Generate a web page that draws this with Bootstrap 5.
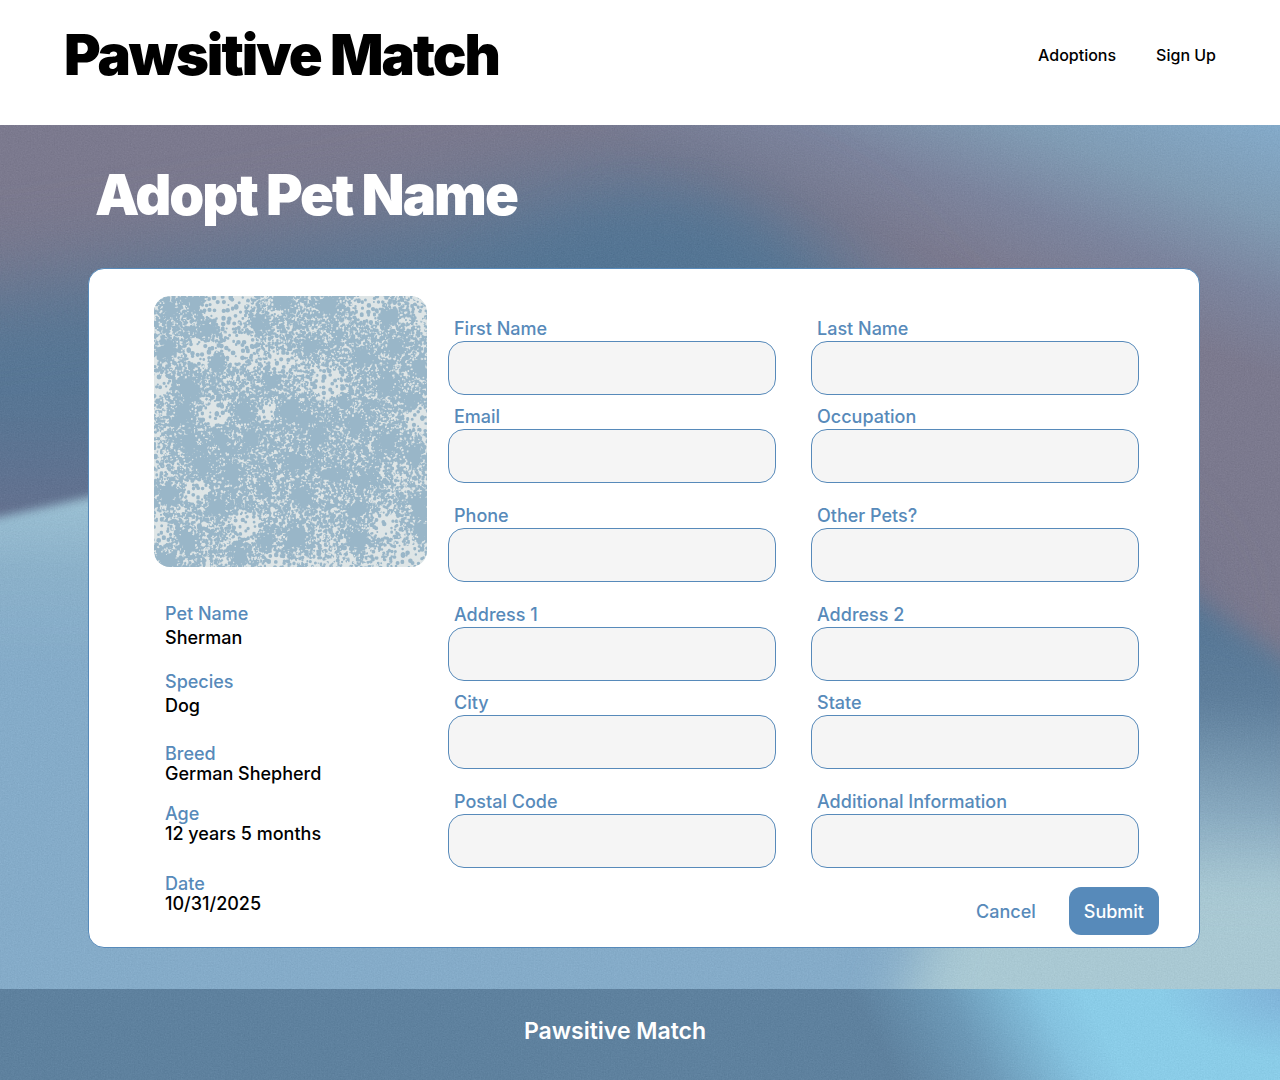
<!DOCTYPE html>
<html lang="en">
<head>
<meta charset="utf-8">
<meta name="viewport" content="width=device-width, initial-scale=1">
<title>Pawsitive Match</title>
<link href="https://cdn.jsdelivr.net/npm/bootstrap@5.3.0/dist/css/bootstrap.min.css" rel="stylesheet">
<style>
  :root { --steel: #578aba; }
  body { font-family: Inter, "Liberation Sans", sans-serif; color: #000; }
  .site-head { padding: 19px 64px 34px; }
  .display-title { font-size: 56px; line-height: 72px; font-weight: 900; letter-spacing: -2px; margin: 0; }
  .site-head nav { gap: 40px; }
  .site-head nav a { color: #000; font-size: 16px; font-weight: 500; text-decoration: none; }
  .backdrop { z-index: 0; }
  .backdrop filter { color-interpolation-filters: sRGB; }
  .adopt { padding: 34px 80px 41px 88px; }
  .adopt h1 { padding-left: 7px; margin-bottom: 37px; }
  .pet-panel { background: #fff; border: 1px solid var(--steel); border-radius: 16px; padding: 27px 40px 12px 65px; gap: 21px; }
  .pet-side { flex: 0 0 273px; }
  .pet-photo { width: 100%; height: 271px; border-radius: 16px; }
  .facts { padding-left: 11px; margin: 35px 0 0; font-size: 18px; line-height: 20px; }
  .facts dt { color: var(--steel); font-weight: 500; }
  .facts dd { font-weight: 500; margin: 0; }
  .facts .roomy { line-height: 24px; margin-bottom: 20px; }
  .facts .tight { margin-top: 26px; }
  .facts .spaced { margin-top: 20px; }
  .facts .wide { margin-top: 30px; }
  .pet-form { min-width: 0; padding-top: 20px; }
  .field-set { padding-right: 20px; gap: 20px; }
  .field-pair { display: grid; grid-template-columns: 1fr 1fr; gap: 9px 35px; }
  .field-pair label { display: block; padding-left: 6px; font-size: 18px; line-height: 25px; font-weight: 500; color: var(--steel); }
  .field-pair .form-control { height: 54px; border: 1px solid var(--steel); border-radius: 16px; background: #f5f5f5; }
  .pet-actions { margin-top: 19px; gap: 18px; }
  .pet-actions .btn { height: 48px; padding: 0 15px; border: 0; border-radius: 12px; font-size: 18px; font-weight: 500; }
  .btn-plain { color: var(--steel); }
  .btn-steel, .btn-steel:hover { background: var(--steel); color: #fff; }
  .site-foot { padding: 24px 50px 31px 0; background: #5c81a0; }
  .site-foot p { font-size: 23px; line-height: 36px; font-weight: 600; margin: 0; }
</style>
</head>
<body>
<header class="site-head d-flex justify-content-between align-items-center bg-white">
  <div class="display-title">Pawsitive Match</div>
  <nav class="d-flex" aria-label="Main">
    <a href="#">Adoptions</a>
    <a href="#">Sign Up</a>
  </nav>
</header>

<main class="position-relative">
  <svg class="backdrop position-absolute top-0 start-0 w-100 h-100" viewBox="0 125 1280 864" preserveAspectRatio="none" aria-hidden="true">
    <defs>
      <filter id="b50" x="-20%" y="-20%" width="140%" height="140%"><feGaussianBlur stdDeviation="44"/></filter>
      <filter id="b25" x="-40%" y="-40%" width="180%" height="180%"><feGaussianBlur stdDeviation="28"/></filter>
      <filter id="b14" x="-20%" y="-20%" width="140%" height="140%"><feGaussianBlur stdDeviation="12"/></filter>
      <filter id="b6" x="-20%" y="-20%" width="140%" height="140%"><feGaussianBlur stdDeviation="5"/></filter>
      <filter id="grain" x="0" y="0" width="100%" height="100%"><feTurbulence type="fractalNoise" baseFrequency="0.7" numOctaves="2" seed="3"/><feColorMatrix values="0.6 0.6 0.6 0 -0.4  0.6 0.6 0.6 0 -0.4  0.6 0.6 0.6 0 -0.4  0 0 0 0 0.06"/></filter>
      <linearGradient id="sky" gradientUnits="userSpaceOnUse" x1="1000" y1="277" x2="1081" y2="52">
        <stop offset="0" stop-color="#7b798f"/><stop offset=".3" stop-color="#7b849f"/><stop offset=".62" stop-color="#809db7"/><stop offset="1" stop-color="#84adce"/>
      </linearGradient>
      <linearGradient id="fall" gradientUnits="userSpaceOnUse" x1="1240" y1="620" x2="1225" y2="940">
        <stop offset="0" stop-color="#547696"/><stop offset=".25" stop-color="#5c7e9d"/><stop offset=".65" stop-color="#8fb2c8"/><stop offset="1" stop-color="#abcdd8"/>
      </linearGradient>
      <linearGradient id="lake" x1="0" y1="490" x2="0" y2="665" gradientUnits="userSpaceOnUse">
        <stop offset="0" stop-color="#9fc6d9"/><stop offset=".45" stop-color="#8cb4ce"/><stop offset="1" stop-color="#85aecd"/>
      </linearGradient>
      <linearGradient id="dusk" x1="0" y1="410" x2="0" y2="515" gradientUnits="userSpaceOnUse">
        <stop offset="0" stop-color="#547696"/><stop offset="1" stop-color="#646f8f"/>
      </linearGradient>
    </defs>
    <rect y="125" width="1280" height="864" fill="url(#sky)"/>
    <path d="M-150 300L0 290L200 260L400 225L560 185L660 175L750 205L830 250L900 320L1180 600V1100H-150Z" fill="url(#dusk)" filter="url(#b50)"/>
    <path d="M520 260L620 215L720 215L830 290L600 360L440 330Z" fill="#507495" filter="url(#b25)" opacity=".8"/>
    <path d="M900 420L1200 602L1300 670V1100H850Z" fill="url(#fall)" filter="url(#b14)"/>
    <path d="M-50 525L0 517L90 497L300 450L900 600L1040 930V1100H-50Z" fill="url(#lake)" filter="url(#b6)"/>
    <path d="M950 870L1400 870V1100H870Z" fill="#accdd8" filter="url(#b25)"/>
    <rect y="125" width="1280" height="864" filter="url(#grain)"/>
  </svg>

  <div class="adopt position-relative">
    <h1 class="display-title text-white">Adopt Pet Name</h1>
    <section class="pet-panel d-flex">
      <aside class="pet-side">
        <svg id="spatter" class="pet-photo d-block" viewBox="0 0 273 271" preserveAspectRatio="xMidYMid slice" role="img" aria-label="Sherman"></svg>
        <dl class="facts">
          <div class="roomy"><dt>Pet Name</dt><dd>Sherman</dd></div>
          <div class="roomy"><dt>Species</dt><dd>Dog</dd></div>
          <div class="tight"><dt>Breed</dt><dd>German Shepherd</dd></div>
          <div class="spaced"><dt>Age</dt><dd>12 years 5 months</dd></div>
          <div class="wide"><dt>Date</dt><dd>10/31/2025</dd></div>
        </dl>
      </aside>
      <form class="pet-form flex-grow-1">
        <div class="field-set d-flex flex-column">
          <div class="field-pair">
            <div><label for="first">First Name</label><input class="form-control" id="first" type="text"></div>
            <div><label for="last">Last Name</label><input class="form-control" id="last" type="text"></div>
            <div><label for="email">Email</label><input class="form-control" id="email" type="email"></div>
            <div><label for="job">Occupation</label><input class="form-control" id="job" type="text"></div>
          </div>
          <div class="field-pair">
            <div><label for="phone">Phone</label><input class="form-control" id="phone" type="tel"></div>
            <div><label for="pets">Other Pets?</label><input class="form-control" id="pets" type="text"></div>
          </div>
          <div class="field-pair">
            <div><label for="addr1">Address 1</label><input class="form-control" id="addr1" type="text"></div>
            <div><label for="addr2">Address 2</label><input class="form-control" id="addr2" type="text"></div>
            <div><label for="city">City</label><input class="form-control" id="city" type="text"></div>
            <div><label for="state">State</label><input class="form-control" id="state" type="text"></div>
          </div>
          <div class="field-pair">
            <div><label for="zip">Postal Code</label><input class="form-control" id="zip" type="text"></div>
            <div><label for="info">Additional Information</label><input class="form-control" id="info" type="text"></div>
          </div>
        </div>
        <div class="pet-actions d-flex justify-content-end">
          <button type="button" class="btn btn-plain">Cancel</button>
          <button type="submit" class="btn btn-steel">Submit</button>
        </div>
      </form>
    </section>
  </div>
</main>

<footer class="site-foot position-relative text-center text-white">
  <svg class="backdrop position-absolute top-0 start-0 w-100 h-100" viewBox="0 0 1280 91" preserveAspectRatio="none" aria-hidden="true">
    <defs>
      <linearGradient id="glow" gradientUnits="userSpaceOnUse" x1="890" y1="75" x2="1070" y2="-20">
        <stop offset="0" stop-color="#5c81a0"/><stop offset=".4" stop-color="#6b9aba"/><stop offset=".8" stop-color="#85c6e5"/><stop offset="1" stop-color="#8bd1ee"/>
      </linearGradient>
      <radialGradient id="edge" gradientUnits="userSpaceOnUse" cx="0" cy="0" r="1" gradientTransform="translate(1300 0) scale(140 70)">
        <stop offset="0" stop-color="#7fb3dc"/><stop offset="1" stop-color="#7fb3dc" stop-opacity="0"/>
      </radialGradient>
    </defs>
    <rect width="1280" height="91" fill="url(#glow)"/>
    <rect width="1280" height="91" fill="url(#edge)"/>
    <rect width="1280" height="91" filter="url(#grain)"/>
  </svg>
  <p class="position-relative">Pawsitive Match</p>
</footer>

<script src="https://cdn.jsdelivr.net/npm/bootstrap@5.3.0/dist/js/bootstrap.bundle.min.js"></script>
<script>
  // Spatter texture: evenly spread dots, ink blots with fine spray, then light flecks.
  let seed = 11;
  const rnd = () => (seed = (seed * 16807) % 2147483647) / 2147483647;
  const gauss = () => rnd() + rnd() + rnd() + rnd() - 2;
  const blots = [[16,12,7],[41,6,8],[54,33,8],[104,29,8],[173,9,11],[128,2,8],[233,21,8],[156,51,9],[209,61,9],[243,52,8],[14,54,9],[63,67,7],[266,72,8],[34,91,11],[234,89,8],[256,106,6],[118,86,7],[89,116,9],[29,117,10],[136,114,9],[203,129,10],[150,122,7],[66,143,7],[98,143,9],[33,144,7],[164,143,8],[233,146,10],[48,169,9],[78,176,10],[141,166,9],[178,179,8],[209,186,9],[261,159,9],[14,197,11],[64,211,10],[148,199,9],[203,214,10],[264,209,9],[142,240,12],[34,244,10],[204,244,10],[86,260,9],[13,265,9],[114,244,7],[268,234,8],[185,38,4],[190,105,5],[110,190,5]];
  const gaps = [[70,14,24],[45,55,15],[84,52,18],[6,89,11],[127,66,12],[175,85,16],[215,12,16],[60,119,14],[263,122,13],[6,236,12],[93,229,14],[43,195,12],[253,262,16],[120,266,11],[230,229,14],[112,116,10]];
  const open = (x, y) => gaps.some(g => Math.hypot(x - g[0], y - g[1]) < g[2] * (.75 + rnd() * .5));
  const dot = (x, y, r) => `M${(x - r).toFixed(1)} ${y.toFixed(1)}a${r.toFixed(1)} ${r.toFixed(1)} 0 1 0 ${(2 * r).toFixed(1)} 0a${r.toFixed(1)} ${r.toFixed(1)} 0 1 0 ${(-2 * r).toFixed(1)} 0`;
  let ink = '', light = '';
  for (let y = 0; y < 276; y += 6)
    for (let x = 0; x < 278; x += 6)
      ink += dot(x + rnd() * 5, y + rnd() * 5, 1 + rnd() * 1.4);
  for (const [cx, cy, r] of blots) {
    ink += dot(cx, cy, r * .7);
    for (let i = 0; i < 50; i++) { const a = rnd() * 6.28, d = r * (.5 + rnd()); ink += dot(cx + Math.cos(a) * d, cy + Math.sin(a) * d, 1 + rnd() * 1.3); }
    for (let i = 0; i < 330; i++) { const x = cx + gauss() * 34, y = cy + gauss() * 34; if (!open(x, y)) ink += dot(x, y, .8 + rnd() * 1.1); }
  }
  for (let i = 0; i < 4200; i++) {
    const x = rnd() * 273, y = rnd() * 271;
    if (!blots.some(b => Math.hypot(x - b[0], y - b[1]) < b[2] * (.8 + rnd() * .5)) && !open(x, y)) light += dot(x, y, .4 + rnd() * .6);
  }
  document.getElementById('spatter').innerHTML =
    `<rect width="273" height="271" fill="#dee5e6"/><path d="${ink}" fill="#99b6c8"/><path d="${light}" fill="#dee5e6"/>`;
</script>
</body>
</html>
